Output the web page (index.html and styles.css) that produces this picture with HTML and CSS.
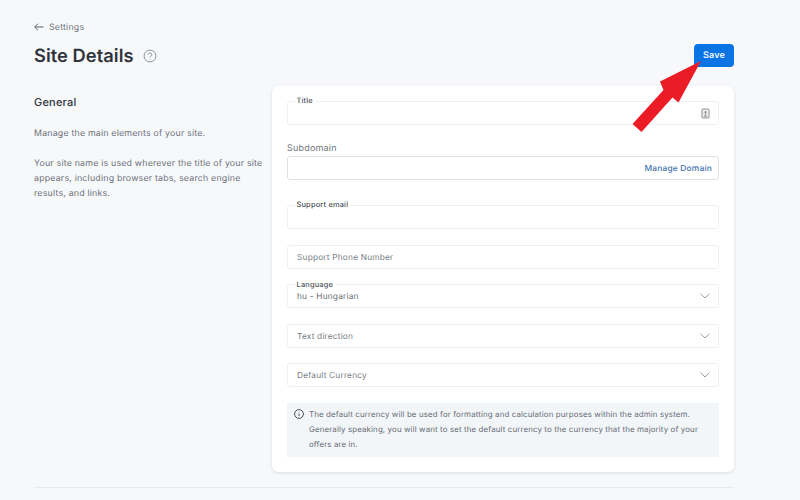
FILE: index.html
```html
<!DOCTYPE html>
<html lang="en">
<head>
<meta charset="utf-8">
<title>Site Details</title>
<link rel="stylesheet" href="styles.css">
</head>
<body>
<div class="page">
  <a class="back"><svg class="back-icon" viewBox="0 0 10 8"><path d="M9.5 4H.7M4 .7.7 4 4 7.3"/></svg><span class="back-text">Settings</span></a>
  <header class="head">
    <h1>Site Details</h1>
    <svg class="help" viewBox="0 0 14 14"><circle cx="7" cy="7" r="5.9"/><path d="M5.2 5.6A1.8 1.8 0 1 1 7.6 7.3c-.5.2-.6.5-.6 1"/><path d="M7 9.8v.6"/></svg>
    <button class="save">Save</button>
  </header>
  <div class="columns">
    <aside class="intro">
      <h2>General</h2>
      <p>Manage the main elements of your site.</p>
      <p>Your site name is used wherever the title of your site appears, including browser tabs, search engine results, and links.</p>
    </aside>
    <section class="card">
      <div class="field first"><span class="legend">Title</span>
        <svg class="clip" viewBox="0 0 10 12"><rect x="1" y="1" width="8" height="10" rx="1"/><path d="M5 8.5V3.5M3.6 5 5 3.5 6.4 5M3.2 9h3.6"/></svg>
      </div>
      <label class="sub-label">Subdomain</label>
      <div class="field strong"><a class="manage">Manage Domain</a></div>
      <div class="field gap-email"><span class="legend">Support email</span></div>
      <div class="field"><span class="ph">Support Phone Number</span></div>
      <div class="field"><span class="legend tight">Language</span><span class="val">hu - Hungarian</span><svg class="chev" viewBox="0 0 10 6"><path d="M.5.7 5 5 9.5.7"/></svg></div>
      <div class="field"><span class="ph">Text direction</span><svg class="chev" viewBox="0 0 10 6"><path d="M.5.7 5 5 9.5.7"/></svg></div>
      <div class="field"><span class="ph">Default Currency</span><svg class="chev" viewBox="0 0 10 6"><path d="M.5.7 5 5 9.5.7"/></svg></div>
      <div class="info">
        <svg class="info-icon" viewBox="0 0 10 10"><circle cx="5" cy="5" r="4.4"/><path d="M5 4.6v2.4M5 2.8v.5"/></svg>
        <p>The default currency will be used for formatting and calculation purposes within the admin system. Generally speaking, you will want to set the default currency to the currency that the majority of your offers are in.</p>
      </div>
    </section>
  </div>
  <hr class="rule">
</div>
<svg class="arrow" viewBox="0 0 800 500"><polygon points="701,61 660,81.5 663.5,90 632.5,124 641.5,132 672.5,97.5 678.5,102.5"/></svg>
</body>
</html>
```
FILE: styles.css
```css
* { box-sizing: border-box; }
html, body { margin: 0; height: 500px; overflow: hidden; }
body { background: #f7f8fa; font-family: Inter, "Liberation Sans", sans-serif; color: #5f6670; position: relative; text-rendering: geometricPrecision; }
.page { padding: 20px 66px 0 34px; }
.back { display: flex; align-items: center; gap: 5px; height: 13px; font-size: 8.8px; letter-spacing: .2px; line-height: 13px; color: #71767f; }
.back-text { padding-top: 1px; }
.back-icon { width: 10px; height: 8px; fill: none; stroke: #5b616a; stroke-width: 1; }
.head { display: flex; align-items: center; margin-top: 6px; height: 32px; }
h1 { margin: 1px 0 0; font-size: 18.3px; font-weight: 600; color: #2f343b; line-height: 32px; letter-spacing: .05px; }
.help { width: 14px; height: 14px; margin: 1px 0 0 9px; fill: none; stroke: #8e959e; stroke-width: 1; }
.save { margin-left: auto; margin-top: 1px; width: 40px; height: 23px; padding: 0; border: 0; border-radius: 4px; background: #0b74e5; color: #eef6ff; font: 600 9px Inter, sans-serif; letter-spacing: .2px; text-rendering: geometricPrecision; }
.columns { display: flex; margin-top: 15px; }
.intro { width: 238px; flex: none; }
h2 { margin: 8px 0 0; font-size: 11px; font-weight: 500; line-height: 16px; color: #30353c; letter-spacing: .2px; }
.intro p { margin: 16px 0 0; width: 232px; font-size: 8.8px; line-height: 15px; letter-spacing: .2px; color: #6b717a; }
.intro p + p { margin-top: 15px; }
.card { width: 462px; height: 386px; padding: 15px; background: #fff; border-radius: 6px; box-shadow: 0 1px 3px rgba(40,50,60,.14); }
.field { position: relative; display: flex; align-items: center; height: 24px; margin-top: 15.6px; padding: 0 9px; border: 1px solid #eff0f2; border-radius: 3px; background: #fff; }
.field.first { margin-top: 0; }
.field.strong { margin-top: 0; border-color: #dfe1e4; justify-content: flex-end; padding-right: 6px; }
.field.gap-email { margin-top: 25px; }
.legend { position: absolute; top: -6px; left: 6.5px; padding: 0 2px; background: #fff; font-size: 7.4px; font-weight: 500; line-height: 10px; color: #4a5058; letter-spacing: .2px; }
.legend.tight { top: -5px; }
.sub-label { display: block; margin-top: 18px; font-size: 9px; line-height: 12px; margin-bottom: 1px; letter-spacing: .2px; color: #6f757d; }
.manage { font-size: 8.4px; font-weight: 500; color: #3f73ac; letter-spacing: .2px; padding-top: 2px; }
.ph { font-size: 8.3px; color: #757b83; letter-spacing: .2px; padding-top: 2px; }
.val { font-size: 8.3px; color: #666c74; letter-spacing: .2px; padding-top: 2px; }
.clip { position: absolute; right: 8px; top: 6px; width: 9px; height: 11px; fill: #ececec; stroke: #7b7f85; stroke-width: .9; }
.chev { margin-left: auto; width: 10px; height: 6px; margin-right: -1px; fill: none; stroke: #9a9fa6; stroke-width: 1; }
.info { display: flex; gap: 5px; margin-top: 15.6px; height: 54px; padding: 4px 7px; background: #f3f6f9; }
.info-icon { flex: none; width: 10px; height: 10px; margin-top: 2px; fill: none; stroke: #3b4047; stroke-width: .9; }
.info p { margin: 0; font-size: 7.9px; line-height: 15px; letter-spacing: .13px; color: #666c75; }
.rule { margin: 15.4px 0 0; border: 0; border-top: 1px solid #e8eaed; }
.arrow { position: absolute; inset: 0; width: 800px; height: 500px; fill: #ec1c27; pointer-events: none; }
```
